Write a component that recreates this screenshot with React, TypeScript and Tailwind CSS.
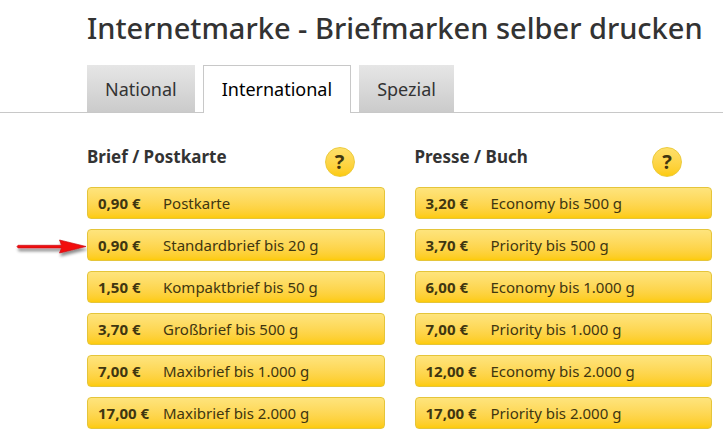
import * as React from 'react';

interface Product {
    price: string;
    name: string;
    marked?: boolean;
}

interface ProductGroup {
    title: string;
    products: Product[];
}

const tabs = ['National', 'International', 'Spezial'];

const groups: ProductGroup[] = [
    {
        title: 'Brief / Postkarte',
        products: [
            { price: '0,90 €', name: 'Postkarte' },
            { price: '0,90 €', name: 'Standardbrief bis 20 g', marked: true },
            { price: '1,50 €', name: 'Kompaktbrief bis 50 g' },
            { price: '3,70 €', name: 'Großbrief bis 500 g' },
            { price: '7,00 €', name: 'Maxibrief bis 1.000 g' },
            { price: '17,00 €', name: 'Maxibrief bis 2.000 g' },
        ],
    },
    {
        title: 'Presse / Buch',
        products: [
            { price: '3,20 €', name: 'Economy bis 500 g' },
            { price: '3,70 €', name: 'Priority bis 500 g' },
            { price: '6,00 €', name: 'Economy bis 1.000 g' },
            { price: '7,00 €', name: 'Priority bis 1.000 g' },
            { price: '12,00 €', name: 'Economy bis 2.000 g' },
            { price: '17,00 €', name: 'Priority bis 2.000 g' },
        ],
    },
];

const MarkerArrow: React.FC = () => (
    <svg viewBox="0 0 74 26" aria-hidden="true" className="pointer-events-none absolute right-full top-1 h-[26px] w-[74px]">
        <defs>
            <filter id="arrow-shadow" x="-10%" y="-30%" width="120%" height="180%">
                <feDropShadow dx="1" dy="3" stdDeviation="1.5" floodColor="#000" floodOpacity="0.45" />
            </filter>
        </defs>
        <path
            d="M4 13.5 L5 12.3 H48.5 L46.5 7 L73 13.5 L46.5 20 L48.5 14.9 H5 Z"
            fill="#f20d0d"
            stroke="#c8141a"
            strokeWidth="0.7"
            filter="url(#arrow-shadow)"
        />
    </svg>
);

const App: React.FC = () => {
    const [activeTab, setActiveTab] = React.useState('International');

    return (
        <div className="min-h-screen bg-white font-['Noto_Sans',sans-serif] text-[#333]">
            <h1 className="whitespace-nowrap pl-[87px] pt-2 text-[29px] font-medium leading-10">Internetmarke - Briefmarken selber drucken</h1>

            <div role="tablist" className="mt-[17px] flex gap-2 border-b border-[#c8c8c8] pl-[87px] text-lg">
                {tabs.map(tab => (
                    <button
                        key={tab}
                        type="button"
                        role="tab"
                        aria-selected={tab === activeTab}
                        onClick={() => setActiveTab(tab)}
                        className={tab === activeTab
                            ? '-mb-px h-12 border border-b-0 border-[#c8c8c8] bg-white px-[18px] pb-0.5 text-black'
                            : 'h-[47px] bg-linear-to-b from-[#e6e6e6] to-[#cbcbcb] px-[18px]'}
                    >
                        {tab}
                    </button>
                ))}
            </div>

            <div className="grid grid-cols-2 gap-[30px] pl-[87px] pr-[11px] pt-[34px]">
                {groups.map(group => (
                    <section key={group.title}>
                        <div className="flex h-[30px] justify-between pr-[30px]">
                            <h2 className="text-[17px] font-bold leading-5">{group.title}</h2>
                            <button type="button" aria-label={`Hilfe zu ${group.title}`} className="h-[30px] w-[30px] rounded-full border border-[#eccb3c] bg-linear-to-b from-[#fee06a] to-[#fdcb06] text-xl font-bold leading-7 text-[#3f3610]">?</button>
                        </div>
                        <ul className="mt-[10px] space-y-[10px]">
                            {group.products.map(product => (
                                <li key={product.name} className="relative">
                                    {product.marked && <MarkerArrow />}
                                    <button type="button" className="flex h-8 w-full items-center rounded border border-[#e5c53a] bg-linear-to-b from-[#fee47c] to-[#fdcb06] pl-[10px] text-left text-[15px] text-[#3f3610]">
                                        <span className="w-[65px] whitespace-nowrap font-bold">{product.price}</span>
                                        <span>{product.name}</span>
                                    </button>
                                </li>
                            ))}
                        </ul>
                    </section>
                ))}
            </div>
        </div>
    );
};

export default App;
